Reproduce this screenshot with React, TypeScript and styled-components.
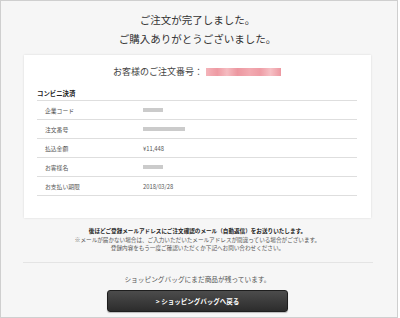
import React from "react";
import styled, { createGlobalStyle } from "styled-components";

const GlobalStyle = createGlobalStyle`
  html, body {
    margin: 0;
    padding: 0;
    background: #ffffff;
  }
  body {
    font-family: "Noto Sans CJK JP", "Noto Sans", sans-serif;
  }
`;

const Frame = styled.div`
  width: 398px;
  height: 318px;
  box-sizing: border-box;
  border: 1px solid #cfcfcf;
  background: #f6f6f6;
  padding: 0 3px 0 0;
  overflow: hidden;
  display: flex;
  flex-direction: column;
  align-items: center;
`;

const Title = styled.h1`
  margin: 9px 0 0;
  font-size: 10.5px;
  line-height: 19px;
  font-weight: normal;
  color: #333;
  text-align: center;
`;

const Card = styled.div`
  width: 347px;
  box-sizing: border-box;
  margin-top: 7px;
  background: #fff;
  box-shadow: 0 0 2px rgba(0, 0, 0, 0.12);
  padding: 10px 14px 22px 13px;
`;

const OrderLine = styled.div`
  display: flex;
  justify-content: center;
  align-items: center;
  font-size: 9px;
  line-height: 14px;
  color: #444;
`;

const PinkBlur = styled.span`
  display: inline-block;
  width: 75px;
  height: 8px;
  margin-left: 3px;
  background: linear-gradient(
    90deg,
    #f4b4ba 0%,
    #ee9aa3 15%,
    #f5bcc1 28%,
    #ec97a0 42%,
    #f2aab1 58%,
    #ee9ca5 72%,
    #f6c0c5 86%,
    #ec98a1 100%
  );
  filter: blur(0.5px);
`;

const SectionTitle = styled.div`
  margin-top: 8px;
  font-size: 6.4px;
  line-height: 13px;
  font-weight: bold;
  color: #222;
  border-bottom: 1px solid #dedede;
`;

const Row = styled.div`
  display: grid;
  grid-template-columns: 98px 1fr;
  align-items: center;
  height: 18px;
  padding-left: 8px;
  border-bottom: 1px solid #dedede;
  font-size: 5.8px;
  color: #555;
`;

const Value = styled.span`
  display: flex;
  align-items: center;
`;

const GrayBlur = styled.span<{ $w: number }>`
  display: block;
  flex: none;
  width: ${(p) => p.$w}px;
  height: 4px;
  background: #cbcbcb;
  filter: blur(0.7px);
`;

const Notes = styled.div`
  margin-top: 9px;
  text-align: center;
  font-size: 5.6px;
  line-height: 8.5px;
  color: #555;
`;

const BoldNote = styled.div`
  font-weight: bold;
  color: #222;
`;

const Divider = styled.div`
  width: 350px;
  height: 1px;
  margin-top: 9px;
  background: #e4e4e4;
`;

const BagText = styled.div`
  margin-top: 11px;
  font-size: 6.7px;
  line-height: 10px;
  color: #555;
`;

const BackButton = styled.button`
  margin-top: 6px;
  width: 181px;
  height: 22px;
  border: 1px solid #1e1e1e;
  border-radius: 3px;
  background: linear-gradient(#4c4c4c, #2c2c2c);
  box-shadow: 0 1px 1px rgba(0, 0, 0, 0.25);
  color: #fff;
  font-family: "Noto Sans CJK JP", "Noto Sans", sans-serif;
  font-size: 6.5px;
  font-weight: bold;
  padding: 0;
  cursor: pointer;
`;

const rows: { label: string; value?: string; blur?: number }[] = [
  { label: "企業コード", blur: 20 },
  { label: "注文番号", blur: 42 },
  { label: "払込金額", value: "¥11,448" },
  { label: "お客様名", blur: 20 },
  { label: "お支払い期限", value: "2018/03/28" },
];

export default function App() {
  return (
    <>
      <GlobalStyle />
      <Frame>
        <Title>
          ご注文が完了しました。
          <br />
          ご購入ありがとうございました。
        </Title>
        <Card>
          <OrderLine>
            お客様のご注文番号：
            <PinkBlur />
          </OrderLine>
          <SectionTitle>コンビニ決済</SectionTitle>
          {rows.map((r) => (
            <Row key={r.label}>
              <span>{r.label}</span>
              <Value>{r.blur ? <GrayBlur $w={r.blur} /> : r.value}</Value>
            </Row>
          ))}
        </Card>
        <Notes>
          <BoldNote>
            後ほどご登録メールアドレスにご注文確認のメール（自動返信）をお送りいたします。
          </BoldNote>
          <div>
            ※メールが届かない場合は、ご入力いただいたメールアドレスが間違っている場合がございます。
          </div>
          <div>登録内容をもう一度ご確認いただくか下記へお問い合わせください。</div>
        </Notes>
        <Divider />
        <BagText>ショッピングバッグにまだ商品が残っています。</BagText>
        <BackButton>&gt; ショッピングバッグへ戻る</BackButton>
      </Frame>
    </>
  );
}
